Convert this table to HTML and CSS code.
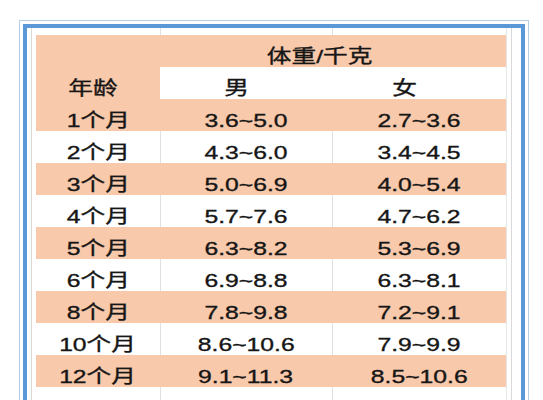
FILE: index.html
```html
<!DOCTYPE html>
<html lang="zh">
<head>
<meta charset="utf-8">
<link rel="stylesheet" href="styles.css">
</head>
<body>
<div class="frame">
  <div class="sheet">
    <div class="row strip"><div></div><div></div><div></div><div></div><div></div></div>
    <div class="row">
      <div></div>
      <div class="cell fill"></div>
      <div class="cell fill span2 title"><span>体重/千克</span></div>
      <div></div>
    </div>
    <div class="row">
      <div></div>
      <div class="cell fill age"><span>年龄</span></div>
      <div class="cell male"><span>男</span></div>
      <div class="cell female"><span>女</span></div>
      <div></div>
    </div>
    <div class="row"><div></div><div class="cell fill"><span>1个月</span></div><div class="cell fill"><span>3.6~5.0</span></div><div class="cell fill"><span>2.7~3.6</span></div><div></div></div>
    <div class="row"><div></div><div class="cell"><span>2个月</span></div><div class="cell"><span>4.3~6.0</span></div><div class="cell"><span>3.4~4.5</span></div><div></div></div>
    <div class="row"><div></div><div class="cell fill"><span>3个月</span></div><div class="cell fill"><span>5.0~6.9</span></div><div class="cell fill"><span>4.0~5.4</span></div><div></div></div>
    <div class="row"><div></div><div class="cell"><span>4个月</span></div><div class="cell"><span>5.7~7.6</span></div><div class="cell"><span>4.7~6.2</span></div><div></div></div>
    <div class="row"><div></div><div class="cell fill"><span>5个月</span></div><div class="cell fill"><span>6.3~8.2</span></div><div class="cell fill"><span>5.3~6.9</span></div><div></div></div>
    <div class="row"><div></div><div class="cell"><span>6个月</span></div><div class="cell"><span>6.9~8.8</span></div><div class="cell"><span>6.3~8.1</span></div><div></div></div>
    <div class="row"><div></div><div class="cell fill"><span>8个月</span></div><div class="cell fill"><span>7.8~9.8</span></div><div class="cell fill"><span>7.2~9.1</span></div><div></div></div>
    <div class="row"><div></div><div class="cell"><span>10个月</span></div><div class="cell"><span>8.6~10.6</span></div><div class="cell"><span>7.9~9.9</span></div><div></div></div>
    <div class="row"><div></div><div class="cell fill"><span>12个月</span></div><div class="cell fill"><span>9.1~11.3</span></div><div class="cell fill"><span>8.5~10.6</span></div><div></div></div>
    <div class="row"><div></div><div class="cell"></div><div class="cell"></div><div class="cell"></div><div></div></div>
  </div>
</div>
</body>
</html>
```
FILE: styles.css
```css
html {
  overflow: hidden;
}
body {
  margin: 0;
  background: #ffffff;
  font-family: "Liberation Sans", "Noto Sans CJK SC", sans-serif;
  color: #161616;
}
.frame {
  margin: 20px 0 0 19px;
  width: 502px;
  border: 1px solid #b7cde4;
  padding: 3px;
  background: #ffffff;
}
.sheet {
  border: 4px solid #5a98d8;
  border-bottom: none;
  background-color: #ffffff;
  background-image:
    linear-gradient(to right,
      transparent 4px, #d9d9d9 4px, #d9d9d9 5px, transparent 5px,
      transparent 133px, #e0e0e0 133px, #e0e0e0 134px, transparent 134px,
      transparent 305px, #e0e0e0 305px, #e0e0e0 306px, transparent 306px,
      transparent 479px, #e6e6e6 479px, #e6e6e6 480px, transparent 480px,
      transparent 484px, #d9d9d9 484px, #d9d9d9 485px, transparent 485px);
}
.row {
  display: grid;
  grid-template-columns: 9px 124px 172px 174px 7px;
  height: 32px;
}
.row.strip {
  height: 7px;
}
.cell {
  display: flex;
  justify-content: center;
  align-items: flex-end;
  padding-bottom: 1px;
  font-size: 19px;
  line-height: 19px;
  font-weight: 400;
}
.cell span {
  display: inline-block;
  transform: scaleX(1.3);
  white-space: nowrap;
  -webkit-text-stroke: 0.35px #161616;
}
.fill {
  background: #f8c9aa;
}
.male {
  background: #ffffff;
}
.female {
  background: #ffffff;
}
.span2 {
  grid-column: span 2;
}
.title {
  padding-right: 26px;
}
.age {
  padding-right: 10px;
}
.male {
  padding-right: 18px;
}
.female {
  padding-right: 28px;
}
```
